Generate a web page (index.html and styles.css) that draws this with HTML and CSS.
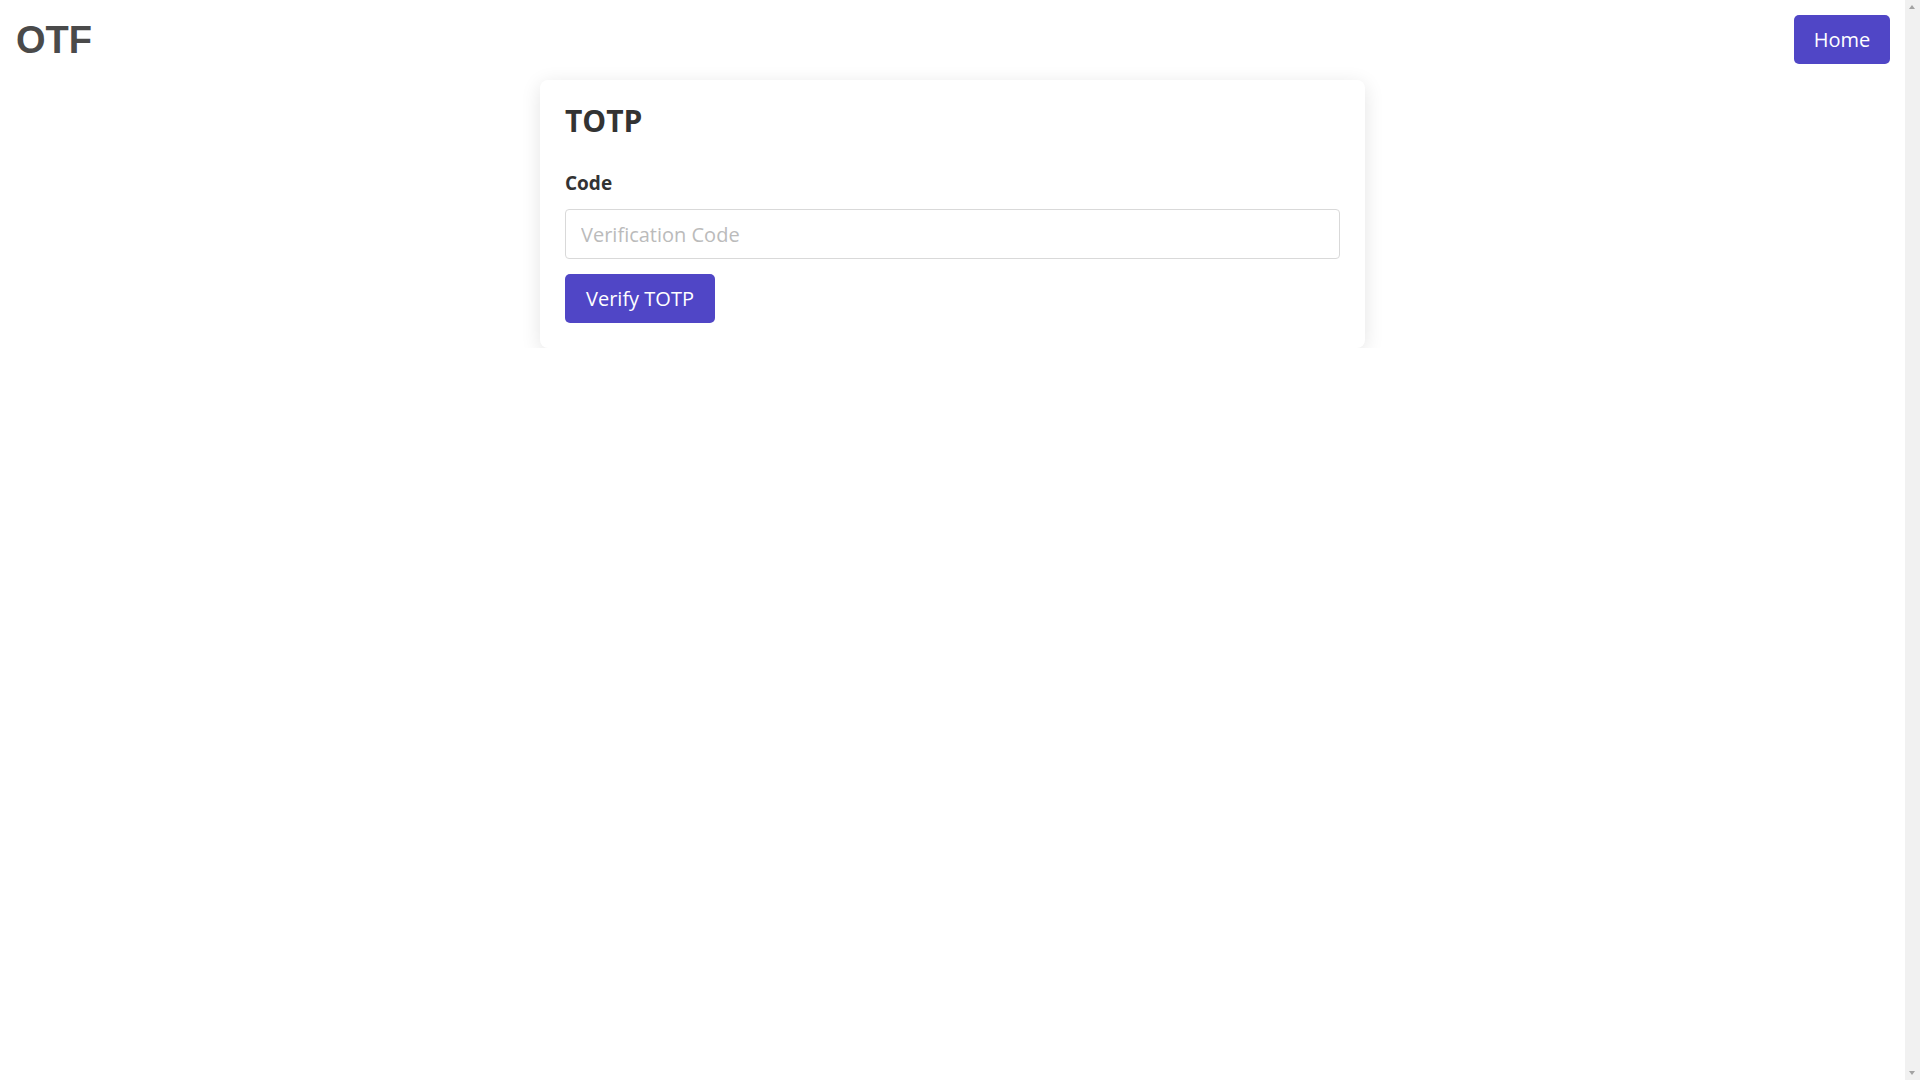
FILE: index.html
```html
<!DOCTYPE html>
<html lang="en">
<head>
<meta charset="utf-8">
<title>OTF - TOTP</title>
<link rel="stylesheet" href="styles.css">
</head>
<body>
<header class="topbar">
  <div class="brand">OTF</div>
  <a class="btn btn-home" href="#">Home</a>
</header>
<main class="page">
  <section class="card">
    <h1 class="card-title">TOTP</h1>
    <form class="form">
      <label class="label" for="code">Code</label>
      <input class="input" id="code" type="text" placeholder="Verification Code">
      <button class="btn btn-submit" type="button">Verify TOTP</button>
    </form>
  </section>
</main>
<div class="scrollbar" aria-hidden="true">
  <span class="arrow arrow-up"></span>
  <span class="arrow arrow-down"></span>
</div>
</body>
</html>
```
FILE: styles.css
```css
body {
  margin: 0 15px 0 0;
  background: #ffffff;
  font-family: "Open Sans", "Noto Sans", sans-serif;
  color: #333333;
}
.topbar {
  display: flex;
  align-items: center;
  justify-content: space-between;
  padding: 15px 15px 15px 16px;
  height: 49px;
}
.brand {
  font-family: "Liberation Sans", Arial, sans-serif;
  font-weight: 700;
  font-size: 38px;
  color: #4a4a4a;
  line-height: 1;
}
.btn {
  display: inline-flex;
  align-items: center;
  justify-content: center;
  background: #5046c6;
  color: #ffffff;
  border: none;
  border-radius: 5px;
  font-family: "Open Sans", "Noto Sans", sans-serif;
  font-size: 20px;
  line-height: 1;
  text-decoration: none;
  box-sizing: border-box;
  height: 49px;
  padding: 0;
  cursor: pointer;
}
.btn-home {
  width: 96px;
}
.page {
  display: flex;
  justify-content: center;
  padding-top: 1px;
}
.card {
  width: 825px;
  box-sizing: border-box;
  padding: 25px;
  border-radius: 8px;
  background: #fff;
  box-shadow: 0 4px 20px rgba(0, 0, 0, 0.11);
}
.card-title {
  margin: 0;
  font-size: 30px;
  font-weight: 700;
  line-height: 32px;
  color: #333;
}
.form {
  display: flex;
  flex-direction: column;
  align-items: flex-start;
  margin-top: 34px;
}
.label {
  font-size: 19px;
  font-weight: 700;
  line-height: 24px;
  color: #333;
  margin-bottom: 14px;
}
.input {
  width: 100%;
  box-sizing: border-box;
  height: 50px;
  padding: 0 15px;
  border: 1px solid #d9d9d9;
  border-radius: 4px;
  font-family: "Open Sans", "Noto Sans", sans-serif;
  font-size: 20px;
  color: #333;
  outline: none;
}
.input::placeholder {
  color: #bbbbbb;
}
.btn-submit {
  margin-top: 15px;
  width: 150px;
}
.scrollbar {
  position: fixed;
  top: 0;
  right: 0;
  bottom: 0;
  width: 15px;
  background: #f1f1f1;
}
.arrow {
  position: absolute;
  left: 4px;
  width: 0;
  height: 0;
  border-left: 3.5px solid transparent;
  border-right: 3.5px solid transparent;
}
.arrow-up {
  top: 5px;
  border-bottom: 4px solid #a3a3a3;
}
.arrow-down {
  bottom: 5px;
  border-top: 4px solid #a3a3a3;
}
```
